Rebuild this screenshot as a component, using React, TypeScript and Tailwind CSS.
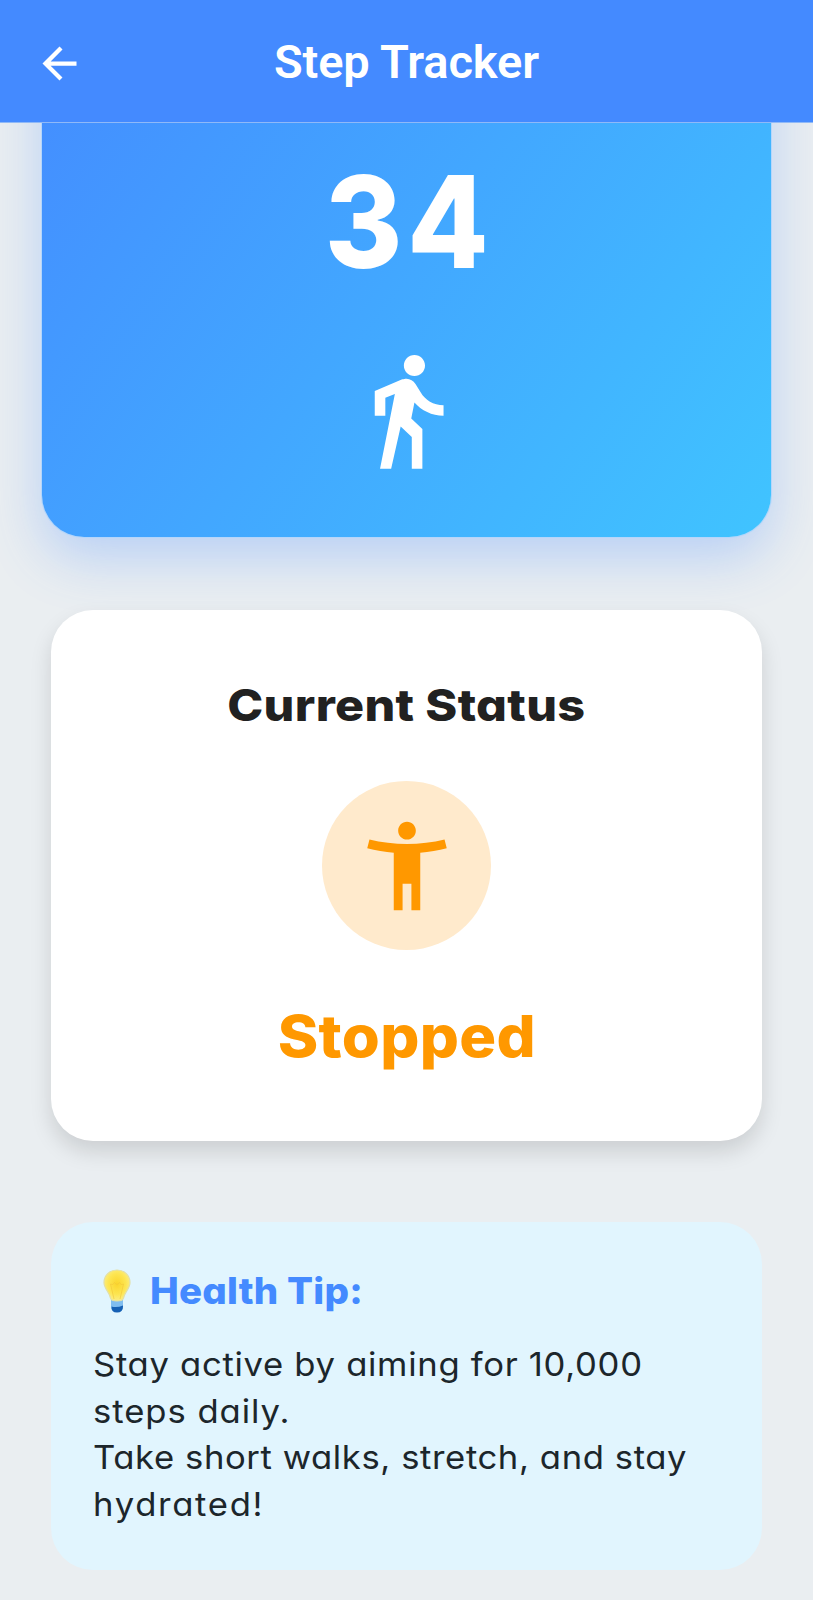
import type { ReactNode } from "react";

function Line({ children, className }: { children: ReactNode; className: string }) {
  return <span className={`block w-max whitespace-nowrap ${className}`}>{children}</span>;
}

function WalkIcon() {
  return (
    <svg viewBox="0 0 24 24" className="block size-[127px]" fill="currentColor">
      <path d="M13.5 5.5c1.1 0 2-.9 2-2s-.9-2-2-2-2 .9-2 2 .9 2 2 2zM9.8 8.9L7 23h2.1l1.8-8 2.1 2v6h2v-7.5l-2.1-2 .6-3C14.8 12 16.8 13 19 13v-2c-1.9 0-3.5-1-4.3-2.4l-1-1.6c-.4-.6-1-1-1.7-1-.3 0-.5.1-.8.1L6 8.3V13h2V9.6l1.8-.7z" />
    </svg>
  );
}

function StandIcon() {
  return (
    <svg viewBox="0 0 24 24" className="block size-[106px]" fill="currentColor">
      <path d="M20.5 6c-2.61.7-5.67 1-8.5 1s-5.89-.3-8.5-1L3 8c1.86.5 4 .83 6 1v13h2v-6h2v6h2V9c2-.17 4.14-.5 6-1l-.5-2zM12 6c1.1 0 2-.9 2-2s-.9-2-2-2-2 .9-2 2 .9 2 2 2z" />
    </svg>
  );
}

function BulbIcon() {
  return (
    <svg viewBox="0 0 28 44" className="block h-[44px] w-[28px]">
      <defs>
        <radialGradient id="glass" cx="50%" cy="45%" r="55%">
          <stop offset="0" stopColor="#fbd52c" />
          <stop offset="0.6" stopColor="#fde550" />
          <stop offset="1" stopColor="#fbee86" />
        </radialGradient>
      </defs>
      <path d="M8 31h12v6q0 6-6 6t-6-6z" fill="#7fbdf0" />
      <path d="M8.500 37.500q5.500 1.500 11.500-1v1q0 6-6 6t-5.500-6z" fill="#1560b4" />
      <path d="M14 1C6.500 1 1 6.500 1 13.500c0 6 5 9 6.500 15.500.3 2 1.500 3 6.500 3s6.200-1 6.500-3C22 22.500 27 19.500 27 13.500 27 6.500 21.500 1 14 1z" fill="url(#glass)" stroke="#e2dfa6" strokeWidth="1.200" />
      <path d="M11 30L7.500 15q2.500 2 4-1.500 2.500 4 5 0 1.500 3.500 4 1.500l-3.500 15" fill="none" stroke="#f3c73a" strokeWidth="0.900" opacity="0.700" />
    </svg>
  );
}

export default function App() {
  return (
    <div className="flex h-[1600px] w-[813px] flex-col overflow-hidden bg-[#eaeef1] font-['Inter',sans-serif] [font-feature-settings:'cv11']">
      <header className="grid h-[122px] shrink-0 grid-cols-[1fr_auto_1fr] items-start bg-[#448aff] px-[34px] text-white">
        <button aria-label="Back" className="mt-[38px] w-max">
          <svg viewBox="0 0 24 24" className="block size-[51px]" fill="currentColor">
            <path d="M20 11H7.830l5.590-5.590L12 4l-8 8 8 8 1.410-1.410L7.830 13H20v-2z" />
          </svg>
        </button>
        <h1 className="mt-[34px] font-['Roboto',sans-serif] text-[47px] leading-[55px] font-semibold tracking-[-0.1px]">Step Tracker</h1>
      </header>

      <main className="flex flex-1 flex-col items-center overflow-hidden border-t border-[#8fb9f8]">
        <section className="-mt-[144px] flex h-[558px] w-[729px] shrink-0 flex-col items-center rounded-[42px] bg-[linear-gradient(127.4deg,#448aff,#40c4ff)] pt-[180px] text-white shadow-[0_0_0_1px_#b4d6fb,0_21px_53px_rgba(68,138,255,0.3)]">
          <Line className="-mr-[5px] scale-x-[0.925] text-[128px] leading-[126px] font-extrabold tracking-[5px]">34</Line>
          <div className="mt-[62px]">
            <WalkIcon />
          </div>
        </section>

        <section className="mt-[73px] flex h-[531px] w-[711px] shrink-0 flex-col items-center rounded-[42px] bg-white pt-[67px] shadow-[0_11px_21px_rgba(0,0,0,0.13)]">
          <Line className="scale-x-[1.09] text-[44.5px] leading-[56px] font-extrabold tracking-[0.3px] text-[#212121]">Current Status</Line>
          <div className="mt-[48px] flex size-[169px] items-center justify-center rounded-full bg-[#ffeacc] text-[#ff9800]">
            <StandIcon />
          </div>
          <Line className="mt-[50px] scale-x-[1.06] text-[58px] leading-[72px] font-extrabold tracking-[0.3px] text-[#ff9800]">Stopped</Line>
        </section>

        <section className="mt-[81px] flex h-[348px] w-[711px] shrink-0 flex-col rounded-[42px] bg-[#e1f5fe] pt-[43px] pl-[42px]">
          <div className="flex h-[52px] items-center gap-[19px] pl-[10px]">
            <BulbIcon />
            <Line className="origin-left scale-x-[1.04] text-[37px] leading-[52px] font-extrabold tracking-[0.2px] text-[#448aff]">Health Tip:</Line>
          </div>
          <div className="mt-[24px] text-[33px] leading-[46.700px] text-[#1c262b]">
            <Line className="origin-left scale-x-105 tracking-[0.65px]">Stay active by aiming for 10,000</Line>
            <Line className="origin-left scale-x-105 tracking-[0.9px]">steps daily.</Line>
            <Line className="origin-left scale-x-105 tracking-[0.56px]">Take short walks, stretch, and stay</Line>
            <Line className="origin-left scale-x-105 tracking-[1.6px]">hydrated!</Line>
          </div>
        </section>
      </main>
    </div>
  );
}
